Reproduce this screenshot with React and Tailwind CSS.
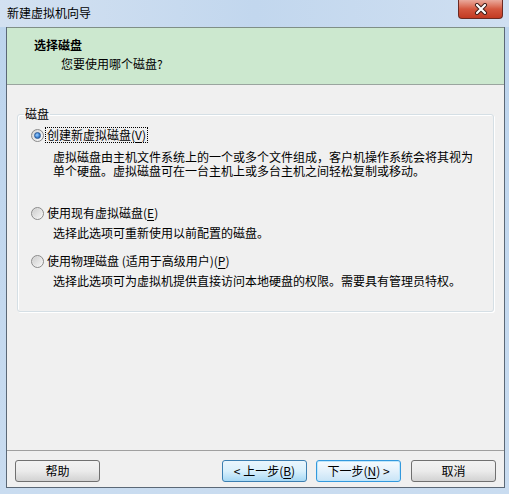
import React from "react";

const font = { fontFamily: '"Noto Sans CJK SC", "Noto Sans", sans-serif' };

function Radio({ checked }) {
  return (
    <div className="w-[13px] h-[13px] rounded-full border border-[#8a8a8a] bg-gradient-to-br from-[#d4d4d4] to-[#fbfbfb] flex items-center justify-center shrink-0">
      {checked ? (
        <div className="w-[7px] h-[7px] rounded-full bg-[radial-gradient(circle_at_40%_40%,#9fd0ff_0%,#3f86d6_55%,#1f4e8f_100%)] border border-[#2c5a96]" />
      ) : (
        <div className="w-[9px] h-[9px] rounded-full bg-gradient-to-br from-[#cfcfcf] to-[#f4f4f4]" />
      )}
    </div>
  );
}

function U({ children }) {
  return <span className="underline underline-offset-2">{children}</span>;
}

function Btn({ children, variant }) {
  let cls =
    "h-[22px] w-[85px] rounded-[3px] border text-[12px] leading-none flex items-center justify-center text-black ";
  if (variant === "hover") {
    cls += "border-[#3c7fb1] bg-gradient-to-b from-[#eaf6fd] via-[#d9f0fc] to-[#a7d9f5]";
  } else if (variant === "default") {
    cls += "border-[#3399dd] bg-gradient-to-b from-[#f6fbfe] via-[#e3f1fb] to-[#c9e4f6] shadow-[inset_0_0_0_1px_#bfe6fb]";
  } else {
    cls += "border-[#707070] bg-gradient-to-b from-[#f2f2f2] via-[#ebebeb] to-[#d2d2d2]";
  }
  return <div className={cls}>{children}</div>;
}

export default function App() {
  return (
    <div
      className="w-[509px] h-[494px] flex flex-col bg-gradient-to-b from-[#bcd4ed] to-[#c9dcf0] overflow-hidden text-black"
      style={font}
    >
      {/* Title bar */}
      <div className="h-[27px] flex items-start justify-between shrink-0 bg-gradient-to-r from-[#d3e1f1] via-[#c2d7ee] to-[#cfdff1]">
        <div className="pl-[7px] pt-[5px] text-[12px] leading-[16px] text-black">新建虚拟机向导</div>
        <div className="mr-[6px] w-[45px] h-[19px] rounded-b-[4px] border border-t-0 border-[#6b2a22] bg-gradient-to-b from-[#e9a99c] via-[#d4573f] to-[#c23a22] flex items-center justify-center">
          <svg width="14" height="12" viewBox="0 0 14 12">
            <path d="M3 2 L11 10 M11 2 L3 10" stroke="#3a1a16" strokeWidth="4" strokeLinecap="round" />
            <path d="M3 2 L11 10 M11 2 L3 10" stroke="#ffffff" strokeWidth="2.2" strokeLinecap="round" />
          </svg>
        </div>
      </div>

      {/* Window body */}
      <div className="flex-1 flex flex-col ml-[6px] mr-[4px] border-x border-b border-[#5b6876] bg-[#f0f0f0]">
        {/* Header */}
        <div className="h-[58px] shrink-0 bg-[#cce8cf] border-t border-b border-t-[#7f8f86] border-b-[#9aa59f] pl-[27px] pt-[9px]">
          <div className="text-[12px] leading-[16px] font-bold">选择磁盘</div>
          <div className="text-[12px] leading-[16px] pl-[27px] pt-[3px]">您要使用哪个磁盘?</div>
        </div>

        {/* Main */}
        <div className="flex-1 px-[10px] pt-[21px]">
          <fieldset className="border border-[#d5dfe5] rounded-[3px] shadow-[inset_1px_1px_0_#ffffff,1px_1px_0_#ffffff] pl-[13px] pr-[10px] pb-[23px]">
            <legend className="ml-[-7px] px-[1px] text-[12px] leading-[16px]">磁盘</legend>
            <div className="mt-[5px] h-[16px] flex items-center">
              <Radio checked />
              <span className="ml-[2px] px-[1px] text-[12px] leading-[14px] outline outline-1 outline-dotted outline-[#000]">
                创建新虚拟磁盘(<U>V</U>)
              </span>
            </div>
            <div className="mt-[7px] pl-[22px] text-[12px] leading-[14px]">
              <div>虚拟磁盘由主机文件系统上的一个或多个文件组成，客户机操作系统会将其视为</div>
              <div>单个硬盘。虚拟磁盘可在一台主机上或多台主机之间轻松复制或移动。</div>
            </div>

            <div className="mt-[27px] h-[16px] flex items-center">
              <Radio />
              <span className="ml-[3px] text-[12px] leading-[14px]">
                使用现有虚拟磁盘(<U>E</U>)
              </span>
            </div>
            <div className="mt-[5px] pl-[22px] text-[12px] leading-[14px]">
              选择此选项可重新使用以前配置的磁盘。
            </div>

            <div className="mt-[13px] h-[16px] flex items-center">
              <Radio />
              <span className="ml-[3px] text-[12px] leading-[14px]">
                使用物理磁盘 (适用于高级用户)(<U>P</U>)
              </span>
            </div>
            <div className="mt-[5px] pl-[22px] text-[12px] leading-[14px]">
              选择此选项可为虚拟机提供直接访问本地硬盘的权限。需要具有管理员特权。
            </div>
          </fieldset>
        </div>

        {/* Separator */}
        <div className="h-[1px] bg-[#a0a0a0] shrink-0" />

        {/* Buttons */}
        <div className="h-[36px] shrink-0 flex items-start pt-[9px] px-[8px]">
          <Btn>帮助</Btn>
          <div className="flex-1" />
          <Btn variant="hover">
            &lt; 上一步(<U>B</U>)
          </Btn>
          <div className="w-[9px]" />
          <Btn variant="default">
            下一步(<U>N</U>) &gt;
          </Btn>
          <div className="w-[10px]" />
          <Btn>取消</Btn>
        </div>
      </div>
      <div className="h-[6px] shrink-0" />
    </div>
  );
}
